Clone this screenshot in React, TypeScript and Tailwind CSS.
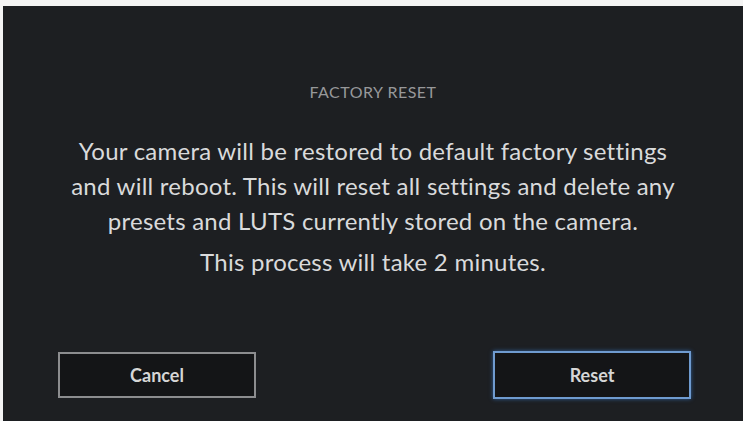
export default function App() {
  return (
    <div className="h-[421px] w-[743px] bg-[#f4f4f4] pl-[3px] pt-[6px] font-['Lato','Liberation_Sans',sans-serif]">
      <div className="flex h-full flex-col bg-[#1d1f22]">
        {/* Title */}
        <div className="mt-[76px] text-center text-[16px] leading-[20px] tracking-[0.03em] text-[#97989a]">
          FACTORY RESET
        </div>

        {/* Body */}
        <div className="mt-[31px] text-center text-[24px] leading-[35px] tracking-[0.01em] text-[#d9dadb]">
          <p>
            Your camera will be restored to default factory settings
            <br />
            and will reboot. This will reset all settings and delete any
            <br />
            presets and LUTS currently stored on the camera.
          </p>
          <p className="mt-[6px]">This process will take 2 minutes.</p>
        </div>

        {/* Buttons */}
        <div className="mt-auto mb-[22px] flex items-center justify-between pl-[55px] pr-[52px]">
          <button className="h-[46px] w-[198px] border-2 border-[#8c8d8f] bg-[#141517] text-[18px] font-bold text-[#d6d6d6]">
            Cancel
          </button>
          <button className="h-[48px] w-[198px] border-2 border-[#6f9bd0] bg-[#141517] text-[18px] font-bold text-[#d6d6d6] shadow-[0_0_4px_#2f5f99]">
            Reset
          </button>
        </div>
      </div>
    </div>
  );
}
